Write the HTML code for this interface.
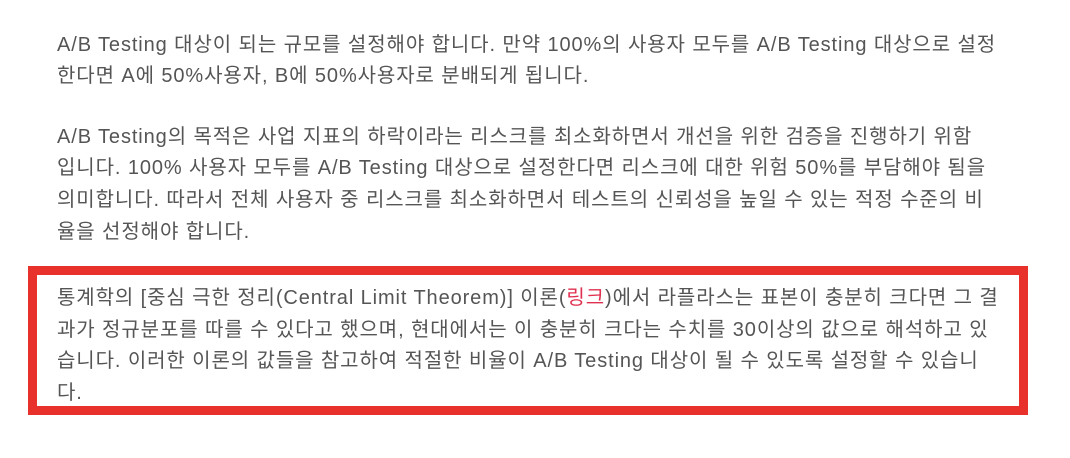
<!DOCTYPE html>
<html><head><meta charset="utf-8"><style>
body{margin:0;width:1070px;height:458px;background:#fff;overflow:hidden;position:relative;font-family:"Liberation Sans","Noto Sans CJK KR",sans-serif;font-size:20px;letter-spacing:0.9px;color:#555;}
.l{position:absolute;left:57px;white-space:nowrap;line-height:22px;}
.box{position:absolute;left:28px;top:266px;width:982px;height:131px;border:9px solid #e8312a;}
a{color:#e03050;text-decoration:none}
</style></head><body>
<div class="l" style="top:34px">A/B Testing 대상이 되는 규모를 설정해야 합니다. 만약 100%의 사용자 모두를 A/B Testing 대상으로 설정</div>
<div class="l" style="top:65px">한다면 A에 50%사용자, B에 50%사용자로 분배되게 됩니다.</div>
<div class="l" style="top:126px">A/B Testing의 목적은 사업 지표의 하락이라는 리스크를 최소화하면서 개선을 위한 검증을 진행하기 위함</div>
<div class="l" style="top:157px">입니다. 100% 사용자 모두를 A/B Testing 대상으로 설정한다면 리스크에 대한 위험 50%를 부담해야 됨을</div>
<div class="l" style="top:189px">의미합니다. 따라서 전체 사용자 중 리스크를 최소화하면서 테스트의 신뢰성을 높일 수 있는 적정 수준의 비</div>
<div class="l" style="top:221px">율을 선정해야 합니다.</div>
<div class="box"></div>
<div class="l" style="top:287px">통계학의 [중심 극한 정리(Central Limit Theorem)] 이론(<a>링크</a>)에서 라플라스는 표본이 충분히 크다면 그 결</div>
<div class="l" style="top:319px">과가 정규분포를 따를 수 있다고 했으며, 현대에서는 이 충분히 크다는 수치를 30이상의 값으로 해석하고 있</div>
<div class="l" style="top:350px">습니다. 이러한 이론의 값들을 참고하여 적절한 비율이 A/B Testing 대상이 될 수 있도록 설정할 수 있습니</div>
<div class="l" style="top:382px">다.</div>
</body></html>
